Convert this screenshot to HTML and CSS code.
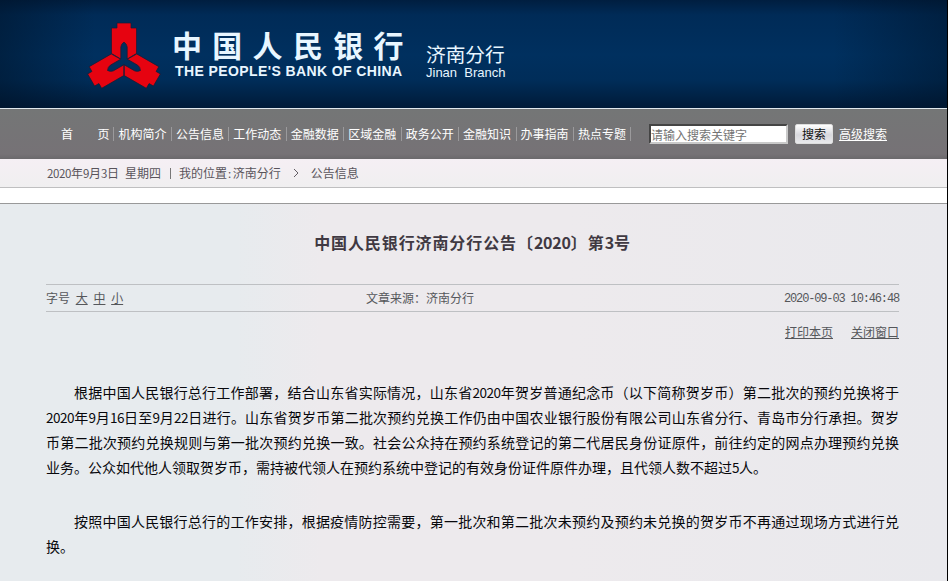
FILE: index.html
```html
<!DOCTYPE html>
<html lang="zh-CN">
<head>
<meta charset="utf-8">
<title>中国人民银行济南分行</title>
<link rel="stylesheet" href="styles.css">
</head>
<body>
<div class="page">
  <header class="banner">
    <svg class="emblem" viewBox="-38 -40 76 70" width="76" height="70">
      <defs><path id="arm" d="M-7-38H7v5h5.500V-7.500L3.200-2V-14Q3-17 0-19Q-3-17-3.200-14V-2L-12.500-7.500V-33H-7Z"/></defs>
      <g fill="#e60310" stroke="#151d36" stroke-width=".7">
        <use href="#arm"/><use href="#arm" transform="rotate(120)"/><use href="#arm" transform="rotate(240)"/>
      </g>
    </svg>
    <div class="bank">
      <div class="bank-cn">中国人民银行</div>
      <div class="bank-en">THE PEOPLE'S BANK OF CHINA</div>
    </div>
    <div class="branch">
      <div class="branch-cn">济南分行</div>
      <div class="branch-en">Jinan&nbsp; Branch</div>
    </div>
  </header>
  <nav class="nav">
    <ul class="menu">
      <li class="home"><span>首</span><span>页</span></li><li>机构简介</li><li>公告信息</li><li>工作动态</li><li>金融数据</li><li>区域金融</li><li>政务公开</li><li>金融知识</li><li>办事指南</li><li>热点专题</li>
    </ul>
    <input class="search" type="text" placeholder="请输入搜索关键字">
    <button class="go">搜索</button>
    <a class="advanced">高级搜索</a>
  </nav>
  <div class="crumbs">
    <span class="date"><b>2020</b>年<b>9</b>月<b>3</b>日</span><span class="week">星期四</span><span class="bar"></span><span>我的位置<b class="colon">:</b>济南分行</span>
    <svg class="chevron" width="6" height="10" viewBox="0 0 6 10"><path d="M1 1l4 4-4 4" fill="none" stroke="#625d64"/></svg>
    <span>公告信息</span>
  </div>
  <div class="strip"></div>
  <main class="article">
    <h1>中国人民银行济南分行公告〔<b>2020</b>〕第<b>3</b>号</h1>
    <div class="meta">
      <div class="sizes">字号 <a>大</a> <a>中</a> <a>小</a></div>
      <div>文章来源：济南分行</div>
      <div class="time">2020-09-03 10:46:48</div>
    </div>
    <div class="actions"><a>打印本页</a><a>关闭窗口</a></div>
    <p>
      <span class="line indent">根据中国人民银行总行工作部署，结合山东省实际情况，山东省<b>2020</b>年贺岁普通纪念币（以下简称贺岁币）第二批次的预约兑换将于</span>
      <span class="line"><b>2020</b>年<b>9</b>月<b>16</b>日至<b>9</b>月<b>22</b>日进行。山东省贺岁币第二批次预约兑换工作仍由中国农业银行股份有限公司山东省分行、青岛市分行承担。贺岁</span>
      <span class="line">币第二批次预约兑换规则与第一批次预约兑换一致。社会公众持在预约系统登记的第二代居民身份证原件，前往约定的网点办理预约兑换</span>
      <span class="line last">业务。公众如代他人领取贺岁币，需持被代领人在预约系统中登记的有效身份证件原件办理，且代领人数不超过<b>5</b>人。</span>
    </p>
    <p>
      <span class="line indent">按照中国人民银行总行的工作安排，根据疫情防控需要，第一批次和第二批次未预约及预约未兑换的贺岁币不再通过现场方式进行兑</span>
      <span class="line last">换。</span>
    </p>
  </main>
</div>
</body>
</html>
```
FILE: styles.css
```css
* { box-sizing: border-box; }
body {
  margin: 0;
  background: #000;
  font: 12px/16px "Noto Sans CJK SC", sans-serif;
  text-spacing-trim: space-all;
}
.page { width: 947px; height: 581px; overflow: hidden; display: flex; flex-direction: column; }
b { font-weight: 400; font-size: 11.500px; letter-spacing: -.4px; line-height: 1; }
.colon { letter-spacing: 1.500px; margin: 0 0 0 1px; }
a { text-decoration: underline; text-underline-offset: 1px; }

.banner {
  height: 109px;
  flex: none;
  display: flex;
  padding-left: 86px;
  color: #e8f6ff;
  background:
    linear-gradient(90deg, rgba(0, 18, 38, .5), transparent 10%, transparent 88%, rgba(0, 18, 38, .45)),
    linear-gradient(#001e40, #002b57 15px, #00305f 55px, #002d59 80px, #001b39 107px);
  border-bottom: 1px solid #e0e8ec;
}
.emblem { margin-top: 21px; }
.bank { margin: 26px 0 0 11px; width: 253px; white-space: nowrap; }
.bank-cn { font-size: 30px; line-height: 36px; font-weight: 700; letter-spacing: 10.300px; margin-left: -1px; }
.bank-en { font: 700 14px/18px "Liberation Sans", sans-serif; letter-spacing: .4px; margin-left: 2px; }
.branch { margin-top: 41px; }
.branch-cn { font-size: 19.700px; line-height: 25px; }
.branch-en { font: 13px/14px "Liberation Sans", sans-serif; white-space: pre; }

.nav {
  height: 50px;
  flex: none;
  display: flex;
  align-items: center;
  background: linear-gradient(#747676, #767276 45px, #6b696c);
  color: #fff;
}
.menu { display: flex; list-style: none; margin: 0 0 0 57px; padding: 0; width: 592px; }
.menu li { width: 57.450px; padding-left: 4px; border-right: 1px solid #9b9a9c; line-height: 14px; white-space: nowrap; }
.menu .home { display: flex; justify-content: space-between; padding-right: 4px; }
.search {
  width: 139px; height: 20px; padding: 0;
  border: 2px solid #444; border-right-color: #c9c9c9; border-bottom-color: #c9c9c9;
  background: #fff; font: inherit;
}
.search::placeholder { color: #747474; }
.go {
  width: 38px; height: 20px; margin-left: 7px; padding: 0; border: 1px solid #ddd; border-radius: 2px;
  background: linear-gradient(#fff, #d8d8dd 55%, #e9e9ec); color: #111; font: inherit;
}
.advanced { margin-left: 6px; }

.crumbs {
  height: 29px; flex: none; display: flex; align-items: center; padding-left: 47px;
  color: #59545b; background: linear-gradient(#f5eff4, #f0eff0); border-bottom: 1px solid #bfbfc0;
}
.week { margin-left: 6px; }
.bar { width: 1px; height: 11px; margin: 0 8px 0 9px; background: #777; }
.chevron { margin: 0 12px; }
.strip { height: 16px; flex: none; background: #fff; border-bottom: 1px solid #999; }

.article {
  flex: 1; padding: 25px 48px 0 46px; color: #55575b;
  background: linear-gradient(90deg, #e7ebee 25%, #edeaed 34%, #edeaed 60%, #e9e9ed);
}
h1 { margin: 0 0 28px; text-align: center; font-size: 16px; line-height: 27px; letter-spacing: .9px; color: #403942; }
h1 b { font-weight: 700; font-size: 16px; letter-spacing: -.2px; }
.meta {
  display: grid; grid-template-columns: 320px 1fr auto; align-items: center; height: 28px;
  border-top: 1px solid #bec0c3; border-bottom: 1px solid #bec0c3;
}
.sizes { word-spacing: 3px; }
.time { font: 12px/16px "Liberation Mono", monospace; letter-spacing: -1.150px; padding-top: 2px; }
.actions { display: flex; justify-content: flex-end; gap: 18px; margin: 12px 0 40px; }
p { margin: 0 0 29px; font-size: 14px; line-height: 25px; color: #08080c; }
p b { font-size: 13.500px; letter-spacing: -.5px; }
.line { display: block; height: 25px; white-space: nowrap; text-align: justify; text-align-last: justify; }
.indent { padding-left: 28px; }
.last { text-align-last: left; }
```
